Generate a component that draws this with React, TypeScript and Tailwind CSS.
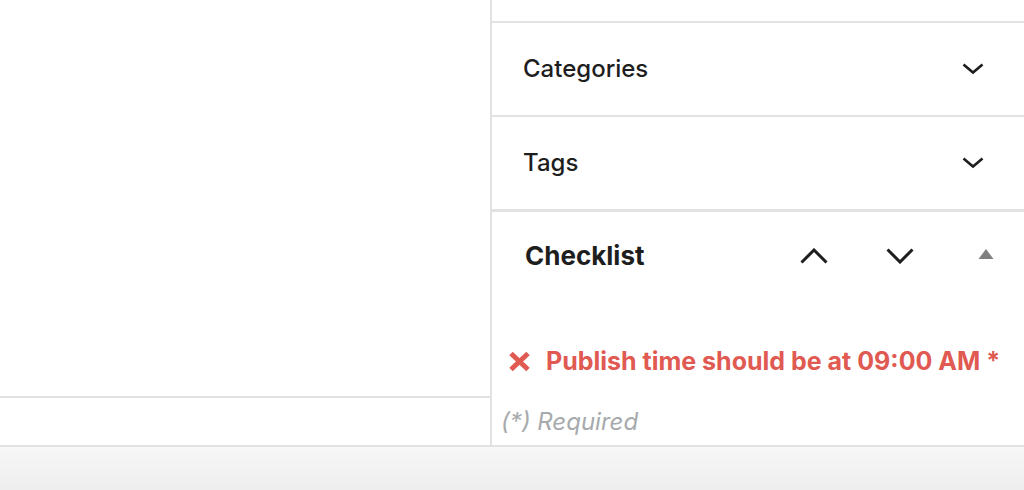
import React from "react";

const font = { fontFamily: "Inter, 'Noto Sans', sans-serif" };

function ChevronDown() {
  return (
    <svg width="22" height="12" viewBox="0 0 22 12" fill="none">
      <path d="M1.5 1.5 L11 9.5 L20.5 1.5" stroke="#1e1e1e" strokeWidth="2.6" />
    </svg>
  );
}

export default function App() {
  return (
    <div className="w-[1024px] h-[490px] flex flex-col bg-white overflow-hidden" style={font}>
      <div className="flex h-[447px] border-b-2 border-[#e2e2e2]">
        <div className="flex-1 flex flex-col">
          <div className="h-[398px] border-b-2 border-[#e2e2e2]" />
          <div className="flex-1" />
        </div>
        <div className="w-[534px] border-l-2 border-[#e2e2e2] flex flex-col">
          <div className="h-[23px] border-b-2 border-[#e2e2e2]" />
          <div className="h-[94px] border-b-2 border-[#e2e2e2] flex items-center justify-between pl-[31px] pr-[40px]">
            <span className="text-[24px] font-medium text-[#1e1e1e] leading-none">Categories</span>
            <ChevronDown />
          </div>
          <div className="h-[95px] border-b-[3px] border-[#e2e2e2] flex items-center justify-between pl-[31px] pr-[40px]">
            <span className="text-[24px] font-medium text-[#1e1e1e] leading-none">Tags</span>
            <ChevronDown />
          </div>
          <div className="flex flex-col">
            <div className="h-[88px] flex items-center pl-[33px] pr-[30px]">
              <span className="flex-1 text-[26px] font-bold text-[#1e1e1e] leading-none">Checklist</span>
              <div className="flex items-center gap-[58px]">
                <svg width="28" height="16" viewBox="0 0 28 16" fill="none">
                  <path d="M1.5 14.5 L14 2 L26.5 14.5" stroke="#1e1e1e" strokeWidth="3" />
                </svg>
                <svg width="28" height="16" viewBox="0 0 28 16" fill="none">
                  <path d="M1.5 1.5 L14 14 L26.5 1.5" stroke="#1e1e1e" strokeWidth="3" />
                </svg>
                <svg width="16" height="12" viewBox="0 0 16 12" className="ml-[6px] mb-[4px]">
                  <path d="M8 1 L15.5 11 L0.5 11 Z" fill="#808080" />
                </svg>
              </div>
            </div>
            <div className="flex items-center gap-[15px] pl-[16px] mt-[49px]">
              <svg width="23" height="21" viewBox="0 0 23 21" fill="none">
                <path d="M3 2.5 L20 18.5 M20 2.5 L3 18.5" stroke="#e05a52" strokeWidth="5" />
              </svg>
              <span className="text-[25px] font-bold text-[#e05a52] leading-none">Publish time should be at 09:00 AM *</span>
            </div>
            <div className="pl-[9px] mt-[36px] text-[24px] italic text-[#a7aaad] leading-none">(*) Required</div>
          </div>
        </div>
      </div>
      <div className="flex-1 bg-gradient-to-b from-[#f7f7f7] to-[#eeeeee]" />
    </div>
  );
}
